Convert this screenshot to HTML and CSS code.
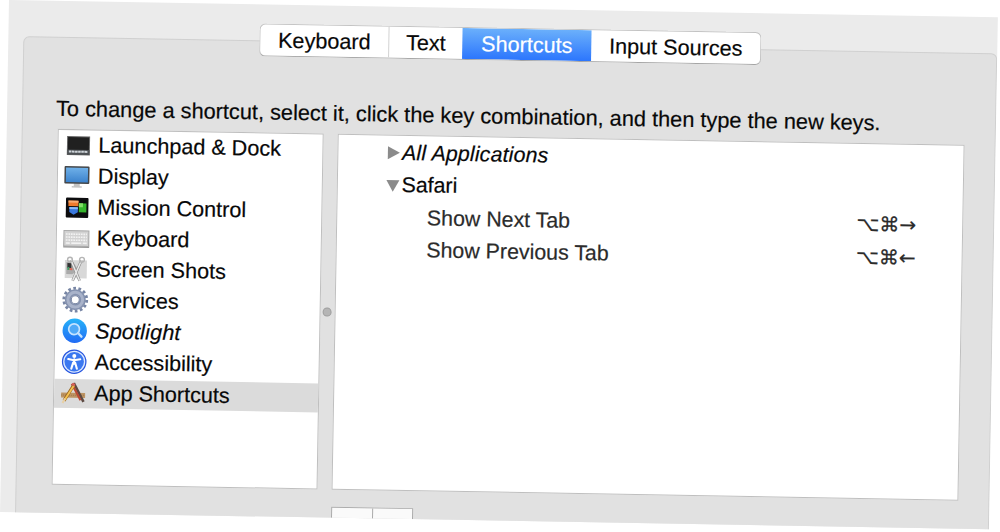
FILE: index.html
```
<!DOCTYPE html>
<html lang="en">
<head>
    <meta charset="utf-8">
    <title>Keyboard</title>
    <link rel="stylesheet" href="styles.css">
</head>
<body>
    <div class="window">
        <div class="tabs">
            <div class="tab keyboard">Keyboard</div>
            <div class="tab text">Text</div>
            <div class="tab shortcuts active">Shortcuts</div>
            <div class="tab sources">Input Sources</div>
        </div>
        <div class="panel">
            <p class="hint">To change a shortcut, select it, click the key combination, and then type the new keys.</p>
            <div class="columns">
                <ul class="categories">
                    <li>
                        <svg class="icon" width="28" height="28" viewBox="0 0 28 28">
                            <rect x="3.500" y="5" width="23" height="19" fill="#666"/>
                            <rect x="4.500" y="6" width="21" height="14" fill="#202020"/>
                            <rect x="4" y="18.500" width="22" height="5" fill="#4c5054"/>
                            <path d="M5.500 20.500h19" stroke="#cfd5da" stroke-width="2" stroke-dasharray="2.600 .5"/>
                        </svg>
                        <span>Launchpad &amp; Dock</span>
                    </li>
                    <li>
                        <svg class="icon" width="28" height="28" viewBox="0 0 28 28">
                            <defs>
                                <linearGradient id="screen" x2="0" y2="1"><stop stop-color="#6fb0e8"/><stop offset="1" stop-color="#3c83cd"/></linearGradient>
                            </defs>
                            <path d="M11 21h6v3h2v1.500h-10v-1.500h2z" fill="#c4c4c4"/>
                            <rect x="1.500" y="4" width="25" height="17.500" rx="1" fill="#44474a"/>
                            <rect x="3" y="5.500" width="22" height="14.500" fill="url(#screen)"/>
                        </svg>
                        <span>Display</span>
                    </li>
                    <li>
                        <svg class="icon" width="28" height="28" viewBox="0 0 28 28">
                            <rect x="3.500" y="4.500" width="22.500" height="20" rx="1" fill="#0c0c0e"/>
                            <rect x="6" y="7.500" width="10" height="5.500" fill="#ef7a2c"/>
                            <rect x="6" y="7.500" width="10" height="2" fill="#f8ab72"/>
                            <rect x="16.500" y="10" width="7.500" height="9" fill="#35b52c"/>
                            <rect x="16.500" y="10" width="4" height="4" fill="#83df68"/>
                            <path d="M7 14h8.500v5l-4.200 2.500-4.300-2.500z" fill="#3a78dd"/>
                            <path d="M7 14h8.500v2h-8.500z" fill="#8bb9f5"/>
                        </svg>
                        <span>Mission Control</span>
                    </li>
                    <li>
                        <svg class="icon" width="28" height="28" viewBox="0 0 28 28">
                            <path d="M3 6.500h24l.5 17h-26z" fill="#999"/>
                            <rect x="2" y="6.500" width="25" height="15.500" fill="#d2d2d2" stroke="#aaa"/>
                            <path d="M4 10h21M4 13h21M4 16h21" stroke="#f2f2f2" stroke-width="1.600" stroke-dasharray="1.700 .8"/>
                            <path d="M4 19h4M9.500 19h10M21 19h4" stroke="#f2f2f2" stroke-width="1.600"/>
                        </svg>
                        <span>Keyboard</span>
                    </li>
                    <li>
                        <svg class="icon" width="28" height="28" viewBox="0 0 28 28">
                            <rect x="3.500" y="5" width="22" height="18" fill="#d8d8d8"/>
                            <path d="M5 7h7l5 8-6 4H5z" fill="#aaa"/>
                            <path d="M6 8h4v5H6z" fill="#333"/>
                            <path d="M8 13h3v2H8z" fill="#d65"/>
                            <path d="M6 12h2v3H6z" fill="#496"/>
                            <path d="M9.500 5l9 20.500M20 5L11.500 25.500" stroke="#888" stroke-width="2.600"/>
                            <path d="M9.500 5l9 20.500M20 5L11.500 25.500" stroke="#e8e8e8" stroke-width="1.500"/>
                            <circle cx="8.500" cy="4.500" r="2.400" fill="none" stroke="#b5b5b5" stroke-width="1.400"/>
                            <circle cx="20.500" cy="4.500" r="2.400" fill="none" stroke="#b5b5b5" stroke-width="1.400"/>
                        </svg>
                        <span>Screen Shots</span>
                    </li>
                    <li>
                        <svg class="icon" width="28" height="28" viewBox="0 0 28 28">
                            <circle cx="14.500" cy="13.500" r="11.400" fill="none" stroke="#7886a5" stroke-width="3" stroke-dasharray="2.700 2.420"/>
                            <circle cx="14.500" cy="13.500" r="7.300" fill="none" stroke="#8592af" stroke-width="6.400"/>
                            <circle cx="14.500" cy="13.500" r="7.400" fill="none" stroke="#a9b3ca" stroke-width="3"/>
                            <circle cx="14.500" cy="13.500" r="4" fill="#fff" stroke="#7481a0"/>
                        </svg>
                        <span>Services</span>
                    </li>
                    <li>
                        <svg class="icon" width="28" height="28" viewBox="0 0 28 28">
                            <defs>
                                <linearGradient id="spot" x2="0" y2="1"><stop stop-color="#27b3f8"/><stop offset="1" stop-color="#216bf5"/></linearGradient>
                            </defs>
                            <circle cx="14.500" cy="13.500" r="12.200" fill="url(#spot)"/>
                            <circle cx="13.800" cy="12" r="5.400" fill="#4fa9f7" stroke="#c4e3ff" stroke-width="1.700"/>
                            <path d="M18 16l3.300 3.300" stroke="#c4e3ff" stroke-width="2.400" stroke-linecap="round"/>
                        </svg>
                        <span class="slanted">Spotlight</span>
                    </li>
                    <li>
                        <svg class="icon" width="28" height="28" viewBox="0 0 28 28">
                            <circle cx="14.500" cy="13.500" r="12.300" fill="#2857df"/>
                            <circle cx="14.500" cy="13.500" r="10.400" fill="#3b78f0" stroke="#dbe8ff" stroke-width="1.300"/>
                            <circle cx="14.500" cy="7.800" r="2" fill="#fff"/>
                            <path d="M8.500 11l4.500.8h3l4.500-.8M14.500 11v4.500M13.500 14.500l-1.800 6M15.500 14.500l1.800 6" fill="none" stroke="#fff" stroke-width="2.100" stroke-linecap="round"/>
                        </svg>
                        <span>Accessibility</span>
                    </li>
                    <li class="selected">
                        <svg class="icon" width="28" height="28" viewBox="0 0 28 28">
                            <path d="M2 13.500h24v5H2z" fill="#bd9463"/>
                            <path d="M2 16h24" stroke="#9a764c" stroke-dasharray="1 1"/>
                            <path d="M14.500 4L24.500 22.500" stroke="#5d4a43" stroke-width="2.600"/>
                            <path d="M12.500 4.500L21.500 21" stroke="#b94a34" stroke-width="2.200"/>
                            <path d="M14.500 6L5 21.500" stroke="#99641d" stroke-width="3.200"/>
                            <path d="M14.800 6L5.500 21" stroke="#f4c252" stroke-width="1.900"/>
                            <path d="M13 4.500l2.500 1.800" stroke="#d4605b" stroke-width="2.600"/>
                            <path d="M6 19.500L3.500 24" stroke="#e8d0a4" stroke-width="2"/>
                        </svg>
                        <span>App Shortcuts</span>
                    </li>
                </ul>
                <div class="splitter"><div class="grip"></div></div>
                <div class="detail">
                    <div class="row app">
                        <svg class="arrow" width="14" height="14" viewBox="0 0 14 14"><path d="M1.500 .5L13.500 7l-12 6.500z" fill="#8b8b8b"/></svg>
                        <span class="slanted">All Applications</span>
                    </div>
                    <div class="row app">
                        <svg class="arrow" width="14" height="14" viewBox="0 0 14 14"><path d="M.5 1.500h13L7 13z" fill="#8b8b8b"/></svg>
                        <span>Safari</span>
                    </div>
                    <div class="row item"><span>Show Next Tab</span><span class="keys">⌥⌘→</span></div>
                    <div class="row item"><span>Show Previous Tab</span><span class="keys">⌥⌘←</span></div>
                </div>
            </div>
            <div class="buttons">
                <div class="button">
                    <svg width="14" height="14" viewBox="0 0 14 14"><path d="M7 0v14M0 7h14" stroke="#222" stroke-width="2"/></svg>
                </div>
                <div class="button"></div>
            </div>
        </div>
    </div>
</body>
</html>
```
FILE: styles.css
```
* {
    box-sizing: border-box;
}
body {
    height: 532px;
    margin: 0;
    background: #fff;
    color: #080808;
    font-family: "Liberation Sans", Arial, sans-serif;
    font-size: 21.6px;
    -webkit-text-stroke: 0.2px;
    overflow: hidden;
}
.window {
    width: 989px;
    height: 512px;
    margin-left: 9px;
    padding-top: 19px;
    background: #ebebeb;
    overflow: hidden;
    transform: rotate(1deg);
    transform-origin: 0 0;
}
.tabs {
    position: relative;
    display: flex;
    width: 502px;
    height: 33px;
    margin-left: 251px;
    background: #fff;
    border: 1px solid #c3c3c3;
    border-bottom-color: #a5a5a5;
    border-radius: 6px;
    overflow: hidden;
}
.tab {
    line-height: 32px;
    text-align: center;
    white-space: nowrap;
}
.keyboard {
    width: 129px;
    border-right: 1px solid #d2d2d2;
}
.text {
    width: 73px;
}
.shortcuts {
    width: 129px;
}
.sources {
    flex: 1;
}
.active {
    color: #fff;
    background: linear-gradient(#6bb0fb, #2c76fd);
}
.panel {
    height: 520px;
    margin: -16px 0 0 15px;
    padding: 58px 30px 0 35px;
    background: #e1e1e1;
    border: 1px solid #d0d0d0;
    border-radius: 6px;
}
.hint {
    height: 33px;
    margin: 0 0 0 -2px;
    font-size: 21.75px;
    line-height: 26px;
    white-space: nowrap;
}
.columns {
    display: flex;
    height: 356px;
}
.categories {
    width: 266px;
    margin: 0;
    padding: 0;
    list-style: none;
    background: #fff;
    border: 1px solid #bfbfbf;
}
.categories li {
    display: flex;
    align-items: center;
    height: 29px;
    margin-bottom: 2.1px;
    padding-left: 5px;
}
.icon {
    flex: none;
    margin-right: 7px;
}
.selected {
    background: #dbdbdb;
}
.slanted {
    font-style: italic;
    letter-spacing: 0.15px;
}
.splitter {
    display: flex;
    align-items: center;
    justify-content: center;
    width: 14px;
}
.grip {
    width: 9px;
    height: 9px;
    margin-right: 1px;
    background: #b5b5b5;
    border: 1px solid #9d9d9d;
    border-radius: 50%;
}
.detail {
    width: 628px;
    padding-top: 1px;
    background: #fff;
    border: 1px solid #bfbfbf;
}
.row {
    display: flex;
    align-items: center;
    height: 32.5px;
    font-size: 21.35px;
}
.app {
    padding-left: 48px;
}
.arrow {
    margin-right: 2px;
}
.item {
    justify-content: space-between;
    padding: 0 46px 0 90px;
    color: #2b2b2b;
}
.keys {
    margin-top: -4px;
    font-family: "DejaVu Sans", sans-serif;
    font-size: 20px;
}
.buttons {
    display: flex;
    width: 82px;
    margin: 17px 0 0 280px;
    border: 1px solid #aaa;
    background: #fafafa;
}
.button {
    width: 40px;
    height: 30px;
    padding-top: 7px;
    text-align: center;
}
.button + .button {
    border-left: 1px solid #aaa;
}
```
